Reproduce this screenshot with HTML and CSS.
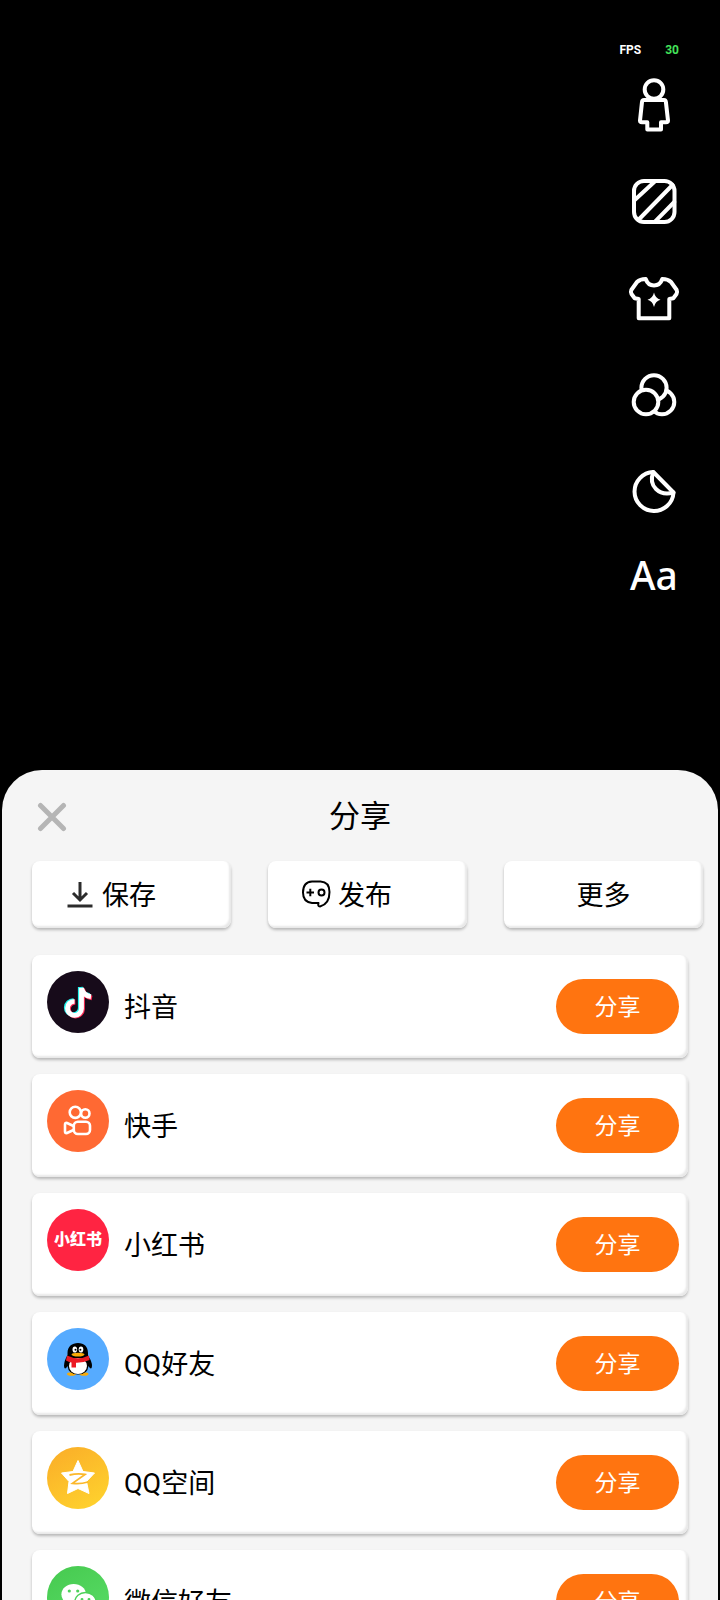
FILE: index.html
```html
<!DOCTYPE html>
<html lang="zh-CN">
<head>
  <meta charset="UTF-8" />
  <meta name="viewport" content="width=device-width, initial-scale=1" />
  <title>分享</title>
  <link rel="stylesheet" href="styles.css">
</head>
<body>
  <!-- 预览区 -->
  <section class="stage">
    <div class="fps"><span>FPS</span><span class="fps-value">30</span></div>
    <nav class="tools">
      <button class="tool" aria-label="人物">
        <svg viewBox="0 0 56 56">
          <circle cx="28" cy="11.5" r="9.3" />
          <path d="M18 22H38Q39.7 22 39.9 24L42 42.5Q42 44.3 40 44.3H35V51.4H21.3V44.3H16Q14 44.3 14 42.5L16 24Q16.3 22 18 22Z" />
        </svg>
      </button>
      <button class="tool" aria-label="背景">
        <svg viewBox="0 0 56 56">
          <rect x="8" y="7" width="40.5" height="41" rx="10" />
          <path d="M8.7 26L28.5 7.7M12.3 46L46.5 11M29 47.7L48.3 28" />
        </svg>
      </button>
      <button class="tool" aria-label="服装">
        <svg viewBox="0 0 56 56">
          <path d="M19.7 9Q22 15.5 28 15.5T36.3 9Q42 9 45 12L50.7 20Q51.6 22 50.5 24L47.3 28.3L43.3 29V48.3H12.7V29L8.7 28.3L5.5 24Q4.4 22 5.3 20L11 12Q14 9 19.7 9Z" />
          <path class="solid" d="M28 22.5Q29.3 28.4 34.5 29.7Q29.3 31 28 37Q26.7 31 21.5 29.7Q26.7 28.4 28 22.5Z" />
        </svg>
      </button>
      <button class="tool" aria-label="滤镜">
        <svg viewBox="0 0 56 56">
          <circle class="over" cx="36" cy="36" r="12.3" />
          <circle class="over" cx="28" cy="21.8" r="12.6" />
          <circle class="over" cx="20" cy="36" r="12.3" />
        </svg>
      </button>
      <button class="tool" aria-label="贴纸">
        <svg viewBox="0 0 56 56">
          <path d="M27.3 10A19.5 19.5 0 1 0 47.5 30.5Z" />
          <path d="M27.3 10C22 24 33 34.5 47.5 30.5" />
        </svg>
      </button>
      <button class="tool tool-text">Aa</button>
    </nav>
  </section>

  <!-- 分享面板 -->
  <main class="sheet">
    <header class="sheet-head">
      <button class="close" aria-label="关闭">
        <svg viewBox="0 0 30 30"><path d="M3.500 3.500L26.500 26.500M26.500 3.500L3.500 26.500" /></svg>
      </button>
      <h1>分享</h1>
    </header>

    <div class="actions">
      <button class="action">
        <svg class="icon-save" viewBox="0 0 30 30"><path d="M14 4V21M7 15L14 22L21 15M1.500 28H26.500" /></svg>
        保存
      </button>
      <button class="action">
        <svg class="icon-post" viewBox="0 0 30 30"><path d="M10 3.500H18.500Q27.500 4 27.500 14Q27.500 26 18 28.500Q15.500 28.500 16.500 25H10Q1 24 1 14.500Q1 4 10 3.500Z" /><path d="M4.500 14.500H12M8.300 10.800V18.200" /><circle cx="19.500" cy="14.500" r="3" /></svg>
        发布
      </button>
      <button class="action action-more">更多</button>
    </div>

    <ul class="apps">
      <li class="app">
        <span class="logo douyin">
          <svg viewBox="0 0 62 62">
            <g fill="none" stroke-width="4.800">
              <path stroke="#25f4ee" d="M33.300 16V37A7 7 0 1 1 26.500 29.700M33.300 16Q34 23 42.500 24.500" />
              <path stroke="#fe2c55" d="M35.500 18V38.300A7 7 0 1 1 28.300 31M35.500 18Q37 25.500 45 27" />
              <path stroke="#fff" d="M34.500 17V37.600A7 7 0 1 1 27.500 30.300M34.500 17Q36 24.500 44 25.700" />
            </g>
          </svg>
        </span>
        <span class="name">抖音</span>
        <button class="share">分享</button>
      </li>
      <li class="app">
        <span class="logo kuaishou">
          <svg viewBox="0 0 62 62">
            <g fill="none" stroke="#fff" stroke-width="2.600" stroke-linejoin="round">
              <circle cx="28.300" cy="22.300" r="5.600" />
              <circle cx="38.300" cy="23.500" r="4.200" />
              <rect x="26.800" y="31.800" width="16.200" height="12.200" rx="4" />
              <path d="M26.500 36L20 33Q18 32.500 18 34.500V41.500Q18 43.500 20 43L26.500 40" />
            </g>
          </svg>
        </span>
        <span class="name">快手</span>
        <button class="share">分享</button>
      </li>
      <li class="app">
        <span class="logo xiaohongshu">小红书</span>
        <span class="name">小红书</span>
        <button class="share">分享</button>
      </li>
      <li class="app">
        <span class="logo qq">
          <svg viewBox="0 0 62 62">
            <ellipse cx="24.500" cy="46" rx="4.500" ry="1.800" fill="#faab07" />
            <ellipse cx="37" cy="46" rx="4.500" ry="1.800" fill="#faab07" />
            <path fill="#000" d="M20.500 27V25C20.500 18.500 25 15 31 15S41 18.500 41 25V28Q45 33 45 38Q44.500 43 41.500 38Q40.500 46.500 31 46.500T20.500 38Q17.500 43 17 38Q17 33 20.500 27Z" />
            <ellipse cx="31" cy="38" rx="9" ry="8" fill="#fff" />
            <path fill="#eb1923" d="M20 27.500Q31 33 42 27.500L42.500 32Q36 35 29 34.800V39.500H24.500V34.500Q21.500 34 19 32.500Z" />
            <ellipse cx="27.800" cy="21.500" rx="2.300" ry="3.100" fill="#fff" />
            <ellipse cx="34" cy="21.500" rx="2.300" ry="3.100" fill="#fff" />
            <circle cx="28.500" cy="21.700" r="1" />
            <circle cx="33.400" cy="21.700" r="1" />
            <ellipse cx="31" cy="26.600" rx="6.500" ry="1.900" fill="#faab07" />
          </svg>
        </span>
        <span class="name">QQ好友</span>
        <button class="share">分享</button>
      </li>
      <li class="app">
        <span class="logo qzone">
          <svg viewBox="0 0 62 62">
            <path fill="#fff" stroke="#fff" stroke-linejoin="round" d="M31 13.500L36 24.500L47.500 26L39.500 34.500L42 46.500L31 41.500L20.500 46.500L22 34.500L14.500 26L26 24.500Z" />
            <path fill="none" stroke="#fcb82a" stroke-width="1.800" d="M22.500 28Q31 26 38 27.500L25.500 36.300Q33 37.300 41 35" />
          </svg>
        </span>
        <span class="name">QQ空间</span>
        <button class="share">分享</button>
      </li>
      <li class="app">
        <span class="logo wechat">
          <svg viewBox="0 0 62 62">
            <path fill="#fff" d="M18 34L17 41L23 37Z" />
            <ellipse cx="26.700" cy="28.500" rx="12.300" ry="10.500" fill="#fff" />
            <ellipse cx="38.500" cy="36" rx="10.700" ry="9.500" fill="#fff" stroke="#4dd15a" stroke-width="1.400" />
            <g fill="#4dd15a">
              <circle cx="22.300" cy="25" r="1.600" />
              <circle cx="30.700" cy="25" r="1.600" />
              <circle cx="35" cy="33.300" r="1.400" />
              <circle cx="42" cy="33.300" r="1.400" />
            </g>
          </svg>
        </span>
        <span class="name">微信好友</span>
        <button class="share">分享</button>
      </li>
    </ul>
  </main>
</body>
</html>
```
FILE: styles.css
```css
* {
  box-sizing: border-box;
}
body {
  margin: 0;
  height: 100vh;
  overflow: hidden;
  display: flex;
  flex-direction: column;
  background: #000;
  color: #000;
  font-family: Roboto, "Noto Sans CJK SC", sans-serif;
}
button {
  margin: 0;
  padding: 0;
  border: none;
  background: none;
  color: inherit;
  font-family: inherit;
  cursor: pointer;
}
svg {
  display: block;
}
/* 预览区 */
.stage {
  flex: none;
  display: flex;
  flex-direction: column;
  align-items: flex-end;
  padding: 43px 38px 178px 0;
  color: #fff;
}
.fps {
  display: flex;
  gap: 24px;
  margin: 0 3px 21px 0;
  font-size: 12px;
  font-weight: 700;
  line-height: 14px;
}
.fps-value {
  color: #43e35a;
}
.tools {
  display: flex;
  flex-direction: column;
  gap: 40px;
}
.tool {
  width: 56px;
  height: 56px;
}
.tool svg {
  fill: none;
  stroke: #fff;
  stroke-width: 4;
  stroke-linejoin: round;
  stroke-linecap: round;
}
.tool .solid {
  fill: #fff;
  stroke: none;
}
.tool .over {
  fill: #000;
}
.tool-text {
  height: 34px;
  font-family: "Noto Sans", sans-serif;
  font-size: 39px;
  font-weight: 500;
  line-height: 34px;
}
/* 分享面板 */
.sheet {
  flex: 1;
  min-height: 0;
  overflow: hidden;
  margin: 0 2px;
  padding: 25px 0 0 30px;
  background: #f5f5f5;
  border-radius: 40px 40px 0 0;
}
.sheet-head {
  display: grid;
  grid-template-columns: 30px 1fr 30px;
  align-items: center;
  margin-right: 30px;
  padding: 0 5px;
}
.close {
  width: 30px;
  height: 30px;
}
.close svg {
  fill: none;
  stroke: #b5b5b5;
  stroke-width: 5;
  stroke-linecap: round;
}
h1 {
  margin: 0;
  font-size: 31px;
  font-weight: 400;
  line-height: 44px;
  text-align: center;
}
.actions {
  display: grid;
  grid-template-columns: repeat(3, 1fr);
  gap: 37px;
  margin: 22px 15px 0 0;
}
.action,
.app {
  background: #fff;
  border-radius: 8px;
  box-shadow: 0 2px 3px rgba(0, 0, 0, 0.25), inset -2px -2px 2px #e8e8e8;
}
.action {
  display: flex;
  align-items: center;
  gap: 6px;
  height: 67px;
  padding: 0 34px 3px;
  font-size: 27px;
  white-space: nowrap;
}
.action-more {
  justify-content: center;
}
.action svg {
  flex: none;
  width: 30px;
  height: 30px;
  fill: none;
  stroke: #000;
  stroke-width: 2;
}
.action .icon-save {
  stroke: #2c2c2c;
  stroke-width: 3;
}
.apps {
  display: flex;
  flex-direction: column;
  gap: 16px;
  margin: 27px 30px 0 0;
  padding: 0;
  list-style: none;
}
.app {
  display: flex;
  align-items: center;
  height: 103px;
  padding: 0 9px 0 15px;
}
.logo {
  align-self: flex-start;
  flex: none;
  width: 62px;
  height: 62px;
  margin-top: 16px;
  border-radius: 50%;
  overflow: hidden;
}
.douyin {
  background: #170b1a;
}
.kuaishou {
  background: #ff6933;
}
.xiaohongshu {
  background: #ff2442;
  color: #fff;
  font-size: 16px;
  font-weight: 900;
  line-height: 62px;
  text-align: center;
}
.qq {
  background: #56abff;
}
.qzone {
  background: linear-gradient(150deg, #faac28, #ffd52e);
}
.wechat {
  background: linear-gradient(150deg, #46c94f, #5ade68);
}
.name {
  flex: 1;
  margin-left: 15px;
  padding-bottom: 3px;
  font-size: 27px;
}
.share {
  width: 123px;
  height: 55px;
  padding-bottom: 4px;
  border-radius: 28px;
  background: #ff7410;
  color: #fff;
  font-size: 23px;
}
.icon-post {
  stroke-linejoin: round;
}
```
